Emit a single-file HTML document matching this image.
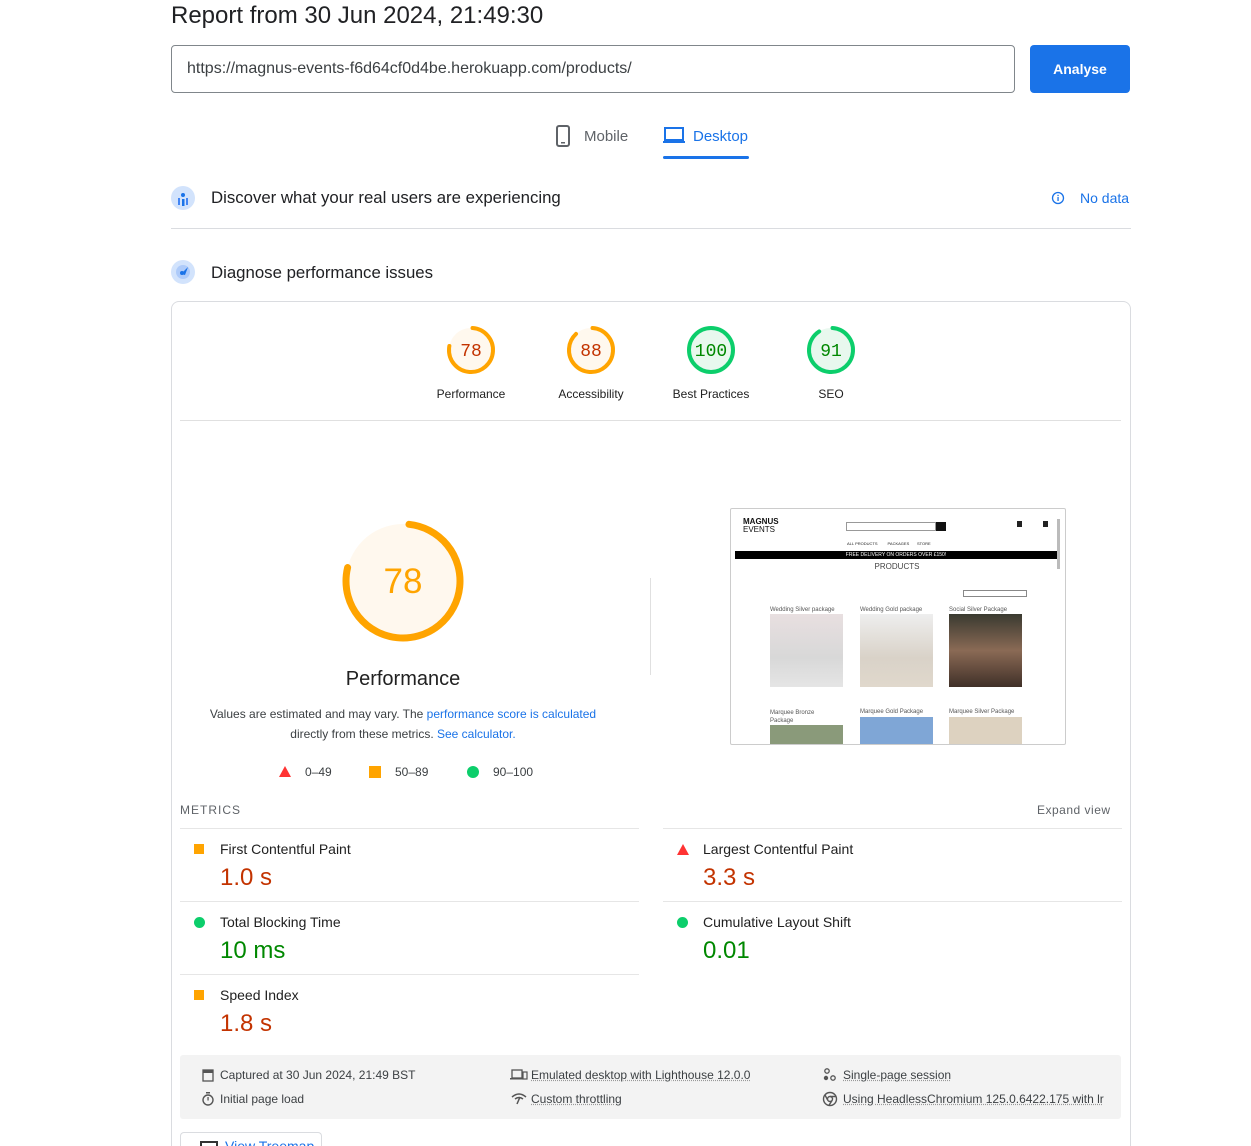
<!DOCTYPE html>
<html style="overflow:hidden;height:1146px"><head><meta charset="utf-8"><style>
*{box-sizing:border-box;margin:0;padding:0}
body{width:1251px;height:1146px;overflow:hidden;background:#fff;font-family:"Liberation Sans",Arial,sans-serif;color:#202124;position:relative}
.a{position:absolute}
.t{white-space:nowrap}
.lbl{font-size:12px;color:#212121;text-align:center;width:120px}
.mline{position:absolute;height:1px;background:#e6e6e6}
.mname{font-size:14px;color:#212121}
.mval{font-size:24px}
.red{color:#c33300}.grn{color:#008800}
.ft{font-size:12px;color:#3c4043}
.ft u{text-decoration:underline dotted #999}
</style></head><body>
<div class="a t" style="left:171px;top:2px;font-size:24px;color:#202124">Report from 30 Jun 2024, 21:49:30</div>
<div class="a" style="left:171px;top:45px;width:844px;height:48px;border:1px solid #80868b;border-radius:4px"></div>
<div class="a t" style="left:187px;top:60px;font-size:16px;color:#3c4043">https://magnus-events-f6d64cf0d4be.herokuapp.com/products/</div>
<div class="a" style="left:1030px;top:45px;width:100px;height:48px;background:#1a73e8;border-radius:4px;color:#fff;font-weight:bold;font-size:14px;text-align:center;line-height:48px">Analyse</div>
<svg class="a" style="left:555px;top:125px" width="18" height="24"><rect x="2" y="1" width="12" height="20" rx="2" fill="none" stroke="#5f6368" stroke-width="2"/><rect x="6" y="17" width="4" height="1.5" fill="#5f6368"/></svg>
<div class="a t" style="left:584px;top:128px;font-size:15px;color:#5f6368">Mobile</div>
<svg class="a" style="left:662px;top:126px" width="24" height="20"><rect x="3" y="2" width="18" height="12" fill="none" stroke="#1a73e8" stroke-width="2"/><rect x="1" y="15" width="22" height="2" fill="#1a73e8"/></svg>
<div class="a t" style="left:693px;top:128px;font-size:15px;color:#1a73e8">Desktop</div>
<div class="a" style="left:663px;top:156px;width:86px;height:3px;background:#1a73e8;border-radius:2px"></div>
<svg class="a" style="left:171px;top:186px" width="24" height="24"><circle cx="12" cy="12" r="12" fill="#d2e3fc"/><circle cx="12" cy="9" r="2" fill="#1a73e8"/><rect x="7" y="12" width="2" height="7" fill="#4285f4"/><rect x="11" y="13" width="2.5" height="7" fill="#1a73e8"/><rect x="15" y="12" width="2" height="7" fill="#4285f4"/></svg>
<div class="a t" style="left:211px;top:188px;font-size:16.8px;color:#202124">Discover what your real users are experiencing</div>
<svg class="a" style="left:1051px;top:191px" width="14" height="14"><circle cx="7" cy="7" r="5.5" fill="none" stroke="#1a73e8" stroke-width="1.3"/><rect x="6.4" y="6" width="1.3" height="4" fill="#1a73e8"/><rect x="6.4" y="3.8" width="1.3" height="1.3" fill="#1a73e8"/></svg>
<div class="a t" style="left:1080px;top:190px;font-size:14px;color:#1a73e8">No data</div>
<div class="a" style="left:171px;top:228px;width:960px;height:1px;background:#dadce0"></div>
<svg class="a" style="left:171px;top:260px" width="24" height="24"><circle cx="12" cy="12" r="12" fill="#d2e3fc"/><circle cx="12" cy="12" r="7" fill="#aecbfa"/><path d="M10 14 L17 7 L14 15 Z" fill="#1a73e8"/><circle cx="11" cy="13" r="2" fill="#1a73e8"/></svg>
<div class="a t" style="left:211px;top:263px;font-size:16.8px;color:#202124">Diagnose performance issues</div>
<div class="a" style="left:171px;top:301px;width:960px;height:860px;border:1px solid #dadce0;border-radius:8px"></div>

<svg class="a" style="left:445px;top:324px" width="52" height="52"><circle cx="26" cy="26" r="22" fill="#fff8ee"/><circle cx="26" cy="26" r="22" fill="none" stroke="#ffa400" stroke-width="4" stroke-dasharray="106 200" stroke-linecap="round" transform="rotate(-86 26 26)"/><text x="26" y="32" text-anchor="middle" font-family="Liberation Mono,monospace" font-size="18" fill="#c33300">78</text></svg>
<svg class="a" style="left:565px;top:324px" width="52" height="52"><circle cx="26" cy="26" r="22" fill="#fff8ee"/><circle cx="26" cy="26" r="22" fill="none" stroke="#ffa400" stroke-width="4" stroke-dasharray="120 200" stroke-linecap="round" transform="rotate(-86 26 26)"/><text x="26" y="32" text-anchor="middle" font-family="Liberation Mono,monospace" font-size="18" fill="#c33300">88</text></svg>
<svg class="a" style="left:685px;top:324px" width="52" height="52"><circle cx="26" cy="26" r="22" fill="#e8f8ee"/><circle cx="26" cy="26" r="22" fill="none" stroke="#0cce6b" stroke-width="4"/><text x="26" y="32" text-anchor="middle" font-family="Liberation Mono,monospace" font-size="18" fill="#008800">100</text></svg>
<svg class="a" style="left:805px;top:324px" width="52" height="52"><circle cx="26" cy="26" r="22" fill="#e8f8ee"/><circle cx="26" cy="26" r="22" fill="none" stroke="#0cce6b" stroke-width="4" stroke-dasharray="124 200" stroke-linecap="round" transform="rotate(-86 26 26)"/><text x="26" y="32" text-anchor="middle" font-family="Liberation Mono,monospace" font-size="18" fill="#008800">91</text></svg>
<div class="a lbl" style="left:411px;top:387px">Performance</div>
<div class="a lbl" style="left:531px;top:387px">Accessibility</div>
<div class="a lbl" style="left:651px;top:387px">Best Practices</div>
<div class="a lbl" style="left:771px;top:387px">SEO</div>
<div class="a" style="left:180px;top:420px;width:941px;height:1px;background:#e0e0e0"></div>

<svg class="a" style="left:339px;top:517px" width="128" height="128"><circle cx="64" cy="64" r="57" fill="#fff8ee"/><circle cx="64" cy="64" r="57" fill="none" stroke="#ffa400" stroke-width="7" stroke-dasharray="276 400" stroke-linecap="round" transform="rotate(-84 64 64)"/><text x="64" y="76" text-anchor="middle" font-family="Liberation Sans,sans-serif" font-size="35" fill="#ffa400">78</text></svg>
<div class="a t" style="left:303px;top:668px;width:200px;text-align:center;font-size:20px;color:#212121">Performance</div>
<div class="a" style="left:190px;top:704px;width:426px;text-align:center;font-size:12px;line-height:20px;color:#3c4043">Values are estimated and may vary. The <span style="color:#1a73e8">performance score is calculated</span> directly from these metrics. <span style="color:#1a73e8">See calculator.</span></div>
<svg class="a" style="left:278px;top:765px" width="14" height="13"><path d="M7 1 L13 12 L1 12 Z" fill="#ff3333"/></svg>
<div class="a t" style="left:305px;top:765px;font-size:12px;color:#3c4043">0–49</div>
<div class="a" style="left:369px;top:766px;width:12px;height:12px;background:#ffa400"></div>
<div class="a t" style="left:395px;top:765px;font-size:12px;color:#3c4043">50–89</div>
<div class="a" style="left:467px;top:766px;width:12px;height:12px;border-radius:6px;background:#0cce6b"></div>
<div class="a t" style="left:493px;top:765px;font-size:12px;color:#3c4043">90–100</div>
<div class="a" style="left:650px;top:578px;width:1px;height:97px;background:#e0e0e0"></div>

<div class="a" style="left:730px;top:508px;width:336px;height:237px;border:1px solid #ccc;border-radius:2px;overflow:hidden;background:#fff">
 <div class="a t" style="left:12px;top:9px;font-size:8px;line-height:8px;color:#111"><b>MAGNUS</b><br>EVENTS</div>
 <div class="a" style="left:115px;top:13px;width:90px;height:9px;border:1px solid #999"></div>
 <div class="a" style="left:205px;top:13px;width:10px;height:9px;background:#111"></div>
 <div class="a" style="left:286px;top:12px;width:5px;height:6px;background:#222"></div>
 <div class="a" style="left:312px;top:12px;width:5px;height:6px;background:#222"></div>
 <div class="a t" style="left:116px;top:32px;font-size:4px;color:#222">ALL PRODUCTS &nbsp;&nbsp;&nbsp;&nbsp;&nbsp;&nbsp;&nbsp; PACKAGES &nbsp;&nbsp;&nbsp;&nbsp;&nbsp; STORE</div>
 <div class="a" style="left:4px;top:42px;width:322px;height:8px;background:#000;color:#fff;font-size:5px;text-align:center;line-height:8px">FREE DELIVERY ON ORDERS OVER £150!</div>
 <div class="a t" style="left:0;top:53px;width:332px;text-align:center;font-size:8px;color:#444">PRODUCTS</div>
 <div class="a" style="left:232px;top:81px;width:64px;height:7px;border:1px solid #888"></div>
 <div class="a t" style="left:39px;top:98px;font-size:6px;color:#555">Wedding Silver package</div>
 <div class="a t" style="left:129px;top:98px;font-size:6px;color:#555">Wedding Gold package</div>
 <div class="a t" style="left:218px;top:98px;font-size:6px;color:#555">Social Silver Package</div>
 <div class="a" style="left:39px;top:105px;width:73px;height:73px;background:linear-gradient(#e8dfe0,#d8d8d8 60%,#e5e5e5)"></div>
 <div class="a" style="left:129px;top:105px;width:73px;height:73px;background:linear-gradient(#eee,#d9d2c8 60%,#e0d8cc)"></div>
 <div class="a" style="left:218px;top:105px;width:73px;height:73px;background:linear-gradient(#3a3a30,#8a6a55 50%,#403028)"></div>
 <div class="a t" style="left:39px;top:200px;font-size:6px;color:#555;line-height:8px">Marquee Bronze<br>Package</div>
 <div class="a t" style="left:129px;top:200px;font-size:6px;color:#555">Marquee Gold Package</div>
 <div class="a t" style="left:218px;top:200px;font-size:6px;color:#555">Marquee Silver Package</div>
 <div class="a" style="left:39px;top:216px;width:73px;height:20px;background:#8a9a7a"></div>
 <div class="a" style="left:129px;top:208px;width:73px;height:28px;background:#7fa6d6"></div>
 <div class="a" style="left:218px;top:208px;width:73px;height:28px;background:#ddd2c0"></div>
 <div class="a" style="left:326px;top:10px;width:3px;height:50px;background:#bbb"></div>
</div>

<div class="a t" style="left:180px;top:803px;font-size:12px;letter-spacing:1px;color:#5f6368">METRICS</div>
<div class="a t" style="left:1037px;top:803px;font-size:12px;letter-spacing:.5px;color:#5f6368">Expand view</div>
<div class="mline" style="left:180px;top:828px;width:459px"></div>
<div class="mline" style="left:663px;top:828px;width:459px"></div>
<div class="mline" style="left:180px;top:901px;width:459px"></div>
<div class="mline" style="left:663px;top:901px;width:459px"></div>
<div class="mline" style="left:180px;top:974px;width:459px"></div>

<div class="a" style="left:194px;top:844px;width:10px;height:10px;background:#ffa400"></div>
<div class="a t mname" style="left:220px;top:841px">First Contentful Paint</div>
<div class="a t mval red" style="left:220px;top:864px">1.0 s</div>
<svg class="a" style="left:676px;top:843px" width="14" height="13"><path d="M7 1 L13 12 L1 12 Z" fill="#ff3333"/></svg>
<div class="a t mname" style="left:703px;top:841px">Largest Contentful Paint</div>
<div class="a t mval red" style="left:703px;top:864px">3.3 s</div>
<div class="a" style="left:194px;top:917px;width:11px;height:11px;border-radius:6px;background:#0cce6b"></div>
<div class="a t mname" style="left:220px;top:914px">Total Blocking Time</div>
<div class="a t mval grn" style="left:220px;top:937px">10 ms</div>
<div class="a" style="left:677px;top:917px;width:11px;height:11px;border-radius:6px;background:#0cce6b"></div>
<div class="a t mname" style="left:703px;top:914px">Cumulative Layout Shift</div>
<div class="a t mval grn" style="left:703px;top:937px">0.01</div>
<div class="a" style="left:194px;top:990px;width:10px;height:10px;background:#ffa400"></div>
<div class="a t mname" style="left:220px;top:987px">Speed Index</div>
<div class="a t mval red" style="left:220px;top:1010px">1.8 s</div>

<div class="a" style="left:180px;top:1055px;width:941px;height:64px;background:#f3f3f3;border-radius:3px"></div>
<svg class="a" style="left:201px;top:1067px" width="14" height="15"><rect x="2" y="3" width="10" height="11" fill="none" stroke="#555" stroke-width="1.3"/><rect x="2" y="3" width="10" height="3" fill="#555"/></svg>
<div class="a t ft" style="left:220px;top:1068px">Captured at 30 Jun 2024, 21:49 BST</div>
<svg class="a" style="left:201px;top:1091px" width="14" height="15"><circle cx="7" cy="9" r="5" fill="none" stroke="#555" stroke-width="1.4"/><rect x="5" y="1" width="4" height="1.5" fill="#555"/><rect x="6.4" y="6" width="1.3" height="3.5" fill="#555"/></svg>
<div class="a t ft" style="left:220px;top:1092px">Initial page load</div>
<svg class="a" style="left:510px;top:1068px" width="18" height="13"><rect x="2" y="2" width="10" height="8" fill="none" stroke="#555" stroke-width="1.3"/><rect x="0" y="10" width="13" height="1.5" fill="#555"/><rect x="13" y="4" width="4" height="7" fill="none" stroke="#555" stroke-width="1.2"/></svg>
<div class="a t ft" style="left:531px;top:1068px"><u>Emulated desktop with Lighthouse 12.0.0</u></div>
<svg class="a" style="left:511px;top:1092px" width="16" height="13"><path d="M1 5 Q8 -1 15 5" fill="none" stroke="#555" stroke-width="1.5"/><path d="M4 7 Q8 4 12 7" fill="none" stroke="#555" stroke-width="1.5"/><path d="M9 5 L6 12" stroke="#555" stroke-width="1.5"/></svg>
<div class="a t ft" style="left:531px;top:1092px"><u>Custom throttling</u></div>
<svg class="a" style="left:822px;top:1067px" width="15" height="15"><circle cx="5" cy="4" r="2.2" fill="none" stroke="#555" stroke-width="1.3"/><circle cx="4" cy="11" r="2.2" fill="#555"/><circle cx="11" cy="11" r="2.2" fill="none" stroke="#555" stroke-width="1.3"/></svg>
<div class="a t ft" style="left:843px;top:1068px"><u>Single-page session</u></div>
<svg class="a" style="left:822px;top:1091px" width="16" height="16"><circle cx="8" cy="8" r="6.5" fill="none" stroke="#555" stroke-width="1.4"/><circle cx="8" cy="8" r="2.5" fill="none" stroke="#555" stroke-width="1.4"/><path d="M8 5.5 H14 M5.8 9.3 L3 4 M10.2 9.3 L7 14.3" stroke="#555" stroke-width="1.4"/></svg>
<div class="a t ft" style="left:843px;top:1092px"><u>Using HeadlessChromium 125.0.6422.175 with lr</u></div>
<div class="a" style="left:180px;top:1132px;width:142px;height:14px;border:1px solid #dadce0;border-bottom:none;border-radius:4px 4px 0 0;overflow:hidden">
 <div class="a" style="left:19px;top:8px;width:18px;height:14px;border:2px solid #333"></div>
 <div class="a t" style="left:44px;top:5px;font-size:14px;color:#1a73e8">View Treemap</div>
</div>
</body></html>
